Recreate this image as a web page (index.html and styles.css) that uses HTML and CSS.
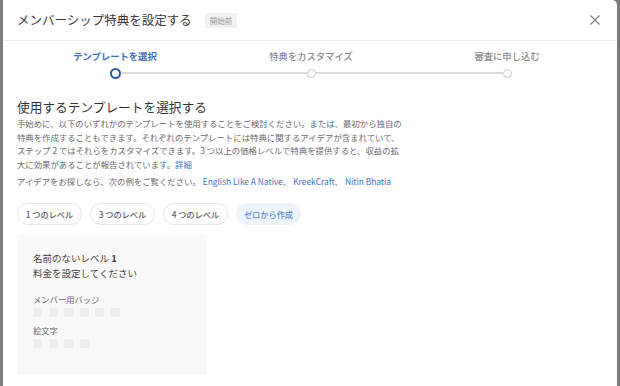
FILE: index.html
```html
<!DOCTYPE html>
<html lang="ja">
<head>
<meta charset="utf-8">
<link rel="stylesheet" href="styles.css">
</head>
<body>
<div class="dialog">
  <header class="header">
    <h1 class="title">メンバーシップ特典を設定する</h1>
    <span class="badge">開始前</span>
    <button class="close" aria-label="閉じる">
      <svg width="10" height="10" viewBox="0 0 10 10"><path d="M0.5 0.5 L9.5 9.5 M9.5 0.5 L0.5 9.5" stroke="#7a7a7a" stroke-width="1.1" fill="none"/></svg>
    </button>
  </header>

  <div class="content">
    <div class="stepper">
      <div class="step step-first step-active">
        <div class="step-label">テンプレートを選択</div>
        <div class="track"><span class="line"></span><span class="dot"></span><span class="line"></span></div>
      </div>
      <div class="step">
        <div class="step-label">特典をカスタマイズ</div>
        <div class="track"><span class="line"></span><span class="dot"></span><span class="line"></span></div>
      </div>
      <div class="step step-last">
        <div class="step-label">審査に申し込む</div>
        <div class="track"><span class="line"></span><span class="dot"></span><span class="line"></span></div>
      </div>
    </div>

    <h2 class="heading">使用するテンプレートを選択する</h2>
    <p class="desc">手始めに、以下のいずれかのテンプレートを使用することをご検討ください。または、最初から独自の<br>特典を作成することもできます。それぞれのテンプレートには特典に関するアイデアが含まれていて、<br>ステップ 2 ではそれらをカスタマイズできます。3 つ以上の価格レベルで特典を提供すると、収益の拡<br>大に効果があることが報告されています。<a class="link" href="#">詳細</a></p>
    <p class="examples">アイデアをお探しなら、次の例をご覧ください。 <a class="link" href="#">English Like A Native</a>、 <a class="link" href="#">KreekCraft</a>、 <a class="link" href="#">Nitin Bhatia</a></p>

    <div class="chips">
      <button class="chip">1 つのレベル</button>
      <button class="chip">3 つのレベル</button>
      <button class="chip">4 つのレベル</button>
      <button class="chip chip-selected">ゼロから作成</button>
    </div>

    <div class="card">
      <div class="card-name">名前のないレベル <b class="num">1</b></div>
      <div class="card-price">料金を設定してください</div>
      <div class="card-label card-label-badge">メンバー用バッジ</div>
      <div class="squares">
        <span class="sq"></span><span class="sq"></span><span class="sq"></span><span class="sq"></span><span class="sq"></span><span class="sq"></span>
      </div>
      <div class="card-label">絵文字</div>
      <div class="squares">
        <span class="sq"></span><span class="sq"></span><span class="sq"></span><span class="sq"></span>
      </div>
    </div>
  </div>
</div>
</body>
</html>
```

FILE: styles.css
```css
* { box-sizing: border-box; }
html, body { margin: 0; padding: 0; }
body {
  background: #7d7d7d;
  width: 620px;
  height: 386px;
  overflow: hidden;
  font-family: "Noto Sans CJK JP", "Noto Sans", sans-serif;
  color: #333;
}
.dialog {
  margin-left: 3px;
  width: 614px;
  height: 386px;
  background: #fff;
  border-top-right-radius: 5px;
  overflow: hidden;
}
.header {
  height: 41px;
  display: flex;
  align-items: center;
  padding: 0 17px 0 14px;
  border-bottom: 1px solid #ececec;
}
.title {
  margin: 0;
  font-size: 12.5px;
  font-weight: 400;
  color: #3a3a3a;
  line-height: 16px;
}
.badge {
  margin-left: 13px;
  height: 15px;
  padding: 0 5px;
  display: flex;
  align-items: center;
  font-size: 7.5px;
  color: #9a9a9a;
  background: #f1f1f1;
  border-radius: 2px;
}
.close {
  margin-left: auto;
  border: 0;
  background: none;
  padding: 0;
  width: 10px;
  height: 10px;
  display: flex;
}
.content {
  padding: 0 12px 0 14px;
}
.stepper {
  display: grid;
  grid-template-columns: repeat(3, 196px);
  padding-top: 9px;
}
.step {
  display: flex;
  flex-direction: column;
  align-items: stretch;
}
.step-label {
  text-align: center;
  font-size: 9.3px;
  line-height: 12px;
  font-weight: 500;
  color: #8a8a8a;
}
.step-active .step-label { color: #3c6db8; font-weight: 700; }
.track {
  margin-top: 6px;
  height: 10px;
  display: flex;
  align-items: center;
}
.line {
  flex: 1;
  height: 2px;
  background: #dcdcdc;
}
.step-first .line:first-child,
.step-last .line:last-child { background: transparent; }
.dot {
  width: 9px;
  height: 9px;
  border: 1.5px solid #c9c9c9;
  border-radius: 50%;
  background: #fff;
  flex: none;
}
.step-active .dot {
  width: 11px;
  height: 11px;
  border: 2px solid #2a5aa6;
}
.heading {
  margin: 21px 0 0 0;
  font-size: 12.7px;
  line-height: 16px;
  font-weight: 400;
  color: #333;
}
.desc {
  margin: 2px 0 0 0;
  font-size: 8.4px;
  line-height: 13.5px;
  color: #6a6a6a;
  white-space: nowrap;
}
.examples {
  margin: 3.5px 0 0 0;
  font-size: 8.4px;
  line-height: 13.5px;
  color: #6a6a6a;
  white-space: nowrap;
}
.link {
  color: #3d70c2;
  text-decoration: none;
}
.chips {
  display: flex;
  gap: 8px;
  margin: 15px 0 0 0;
}
.chip {
  height: 22px;
  width: 65px;
  padding: 0;
  white-space: nowrap;
  border: 1px solid #e6e6e6;
  border-radius: 11px;
  background: #fff;
  font-family: inherit;
  font-size: 8.2px;
  font-weight: 500;
  color: #5a5a5a;
}
.chip-selected {
  border-color: #eef4fc;
  background: #eef4fc;
  color: #5b8bd2;
}
.card {
  margin: 10px 0 0 0;
  width: 190px;
  height: 140px;
  background: #f9f9f9;
  padding: 16px 16px 0 16px;
}
.card-name, .card-price {
  font-size: 9.5px;
  line-height: 14.5px;
  color: #444;
}
.num { font-weight: 700; }
.card-label {
  font-size: 8.3px;
  line-height: 12px;
  color: #666;
  margin-top: 7px;
}
.card-label-badge { margin-top: 13px; }
.squares {
  display: flex;
  gap: 6.5px;
  margin-top: 3px;
}
.sq {
  width: 9px;
  height: 9px;
  background: #eeeeee;
  border-radius: 1px;
}
```
